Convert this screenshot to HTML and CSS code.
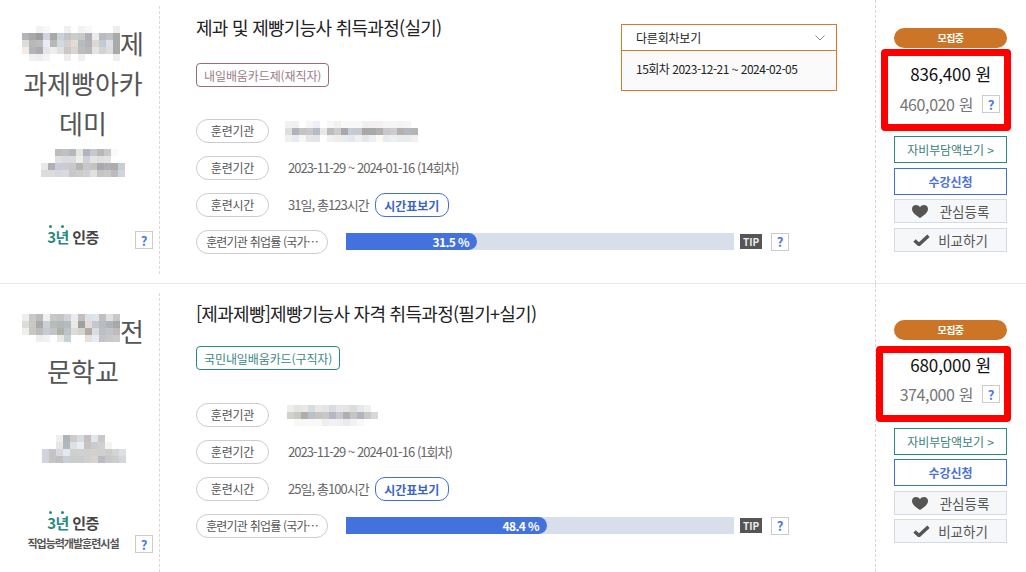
FILE: index.html
```html
<!DOCTYPE html>
<html lang="ko">
<head>
<meta charset="utf-8">
<title>훈련과정 목록</title>
<link rel="stylesheet" href="styles.css">
</head>
<body>
<article class="course">
  <div class="org">
    <div class="org-name">
      <span class="name-line"><svg class="mosaic m-name" viewBox="0 0 14 5" aria-hidden="true"><g>
        <rect x="2" y="0" fill="#f2f2f0"/><rect x="3" y="0" fill="#f8f8f8"/><rect x="6" y="0" fill="#f0f0f2"/><rect x="8" y="0" fill="#f2f2f2"/><rect x="9" y="0" fill="#f8f8f8"/><rect x="13" y="0" fill="#eee"/>
        <rect x="0" y="1" fill="#b4b4b6"/><rect x="1" y="1" fill="#a8a8aa"/><rect x="2" y="1" fill="#9e9e9e"/><rect x="3" y="1" fill="#d0d4dc"/><rect x="4" y="1" fill="#a8a8a8"/><rect x="5" y="1" fill="#ccd0d8"/><rect x="6" y="1" fill="#c4c4c8"/><rect x="7" y="1" fill="#ccccc8"/><rect x="8" y="1" fill="#c8c8c8"/><rect x="9" y="1" fill="#b0b0b0"/><rect x="10" y="1" fill="#ecebec"/><rect x="11" y="1" fill="#b8bcc0"/><rect x="12" y="1" fill="#c0c2c6"/><rect x="13" y="1" fill="#aaa"/>
        <rect x="0" y="2" fill="#dcdcdc"/><rect x="1" y="2" fill="#b8b8b8"/><rect x="2" y="2" fill="#bcbcbc"/><rect x="3" y="2" fill="#e8ecf4"/><rect x="4" y="2" fill="#b8b8b4"/><rect x="5" y="2" fill="#d4d8e0"/><rect x="6" y="2" fill="#d0d0d0"/><rect x="7" y="2" fill="#e4dcd4"/><rect x="8" y="2" fill="#b4bcc0"/><rect x="9" y="2" fill="#b0b4b8"/><rect x="10" y="2" fill="#e0d8d0"/><rect x="11" y="2" fill="#c0ccd4"/><rect x="12" y="2" fill="#dce0e4"/><rect x="13" y="2" fill="#aaa"/>
        <rect x="0" y="3" fill="#f4ece0"/><rect x="1" y="3" fill="#b4b4b4"/><rect x="2" y="3" fill="#acacb0"/><rect x="3" y="3" fill="#e4e6e8"/><rect x="4" y="3" fill="#eceef0"/><rect x="5" y="3" fill="#e0e0e0"/><rect x="6" y="3" fill="#ccc8c8"/><rect x="7" y="3" fill="#dcd4cc"/><rect x="8" y="3" fill="#bcbcc0"/><rect x="9" y="3" fill="#b8b8b8"/><rect x="10" y="3" fill="#e4e4e4"/><rect x="11" y="3" fill="#d0d4d4"/><rect x="12" y="3" fill="#ddd"/><rect x="13" y="3" fill="#aaa"/>
        <rect x="1" y="4" fill="#f0f0f0"/><rect x="2" y="4" fill="#eee"/><rect x="3" y="4" fill="#f4f4f4"/><rect x="6" y="4" fill="#eee"/><rect x="8" y="4" fill="#f0f0f0"/><rect x="13" y="4" fill="#eee"/>
      </g></svg>제</span>
      <span class="name-line">과제빵아카</span>
      <span class="name-line">데미</span>
    </div>
    <svg class="mosaic m-addr" viewBox="0 0 12 4" aria-hidden="true"><g>
      <rect x="2" y="0" fill="#bcbcbc"/><rect x="3" y="0" fill="#c0c0c0"/><rect x="4" y="0" fill="#b4b8bc"/><rect x="5" y="0" fill="#e4e4e0"/><rect x="6" y="0" fill="#b0b4c0"/><rect x="7" y="0" fill="#c8c8c8"/><rect x="8" y="0" fill="#b8b8bc"/><rect x="9" y="0" fill="#c8c8c8"/><rect x="10" y="0" fill="#f8fafa"/>
      <rect x="2" y="1" fill="#e0e0e0"/><rect x="3" y="1" fill="#d8dce0"/><rect x="4" y="1" fill="#dcdcdc"/><rect x="5" y="1" fill="#eeeeea"/><rect x="6" y="1" fill="#d0d0d8"/><rect x="7" y="1" fill="#e4e4e4"/><rect x="8" y="1" fill="#e0e0e0"/><rect x="9" y="1" fill="#e4e4e4"/>
      <rect x="0" y="2" fill="#e8e8e4"/><rect x="1" y="2" fill="#b0b0b0"/><rect x="2" y="2" fill="#c8ccd8"/><rect x="3" y="2" fill="#ccccd0"/><rect x="4" y="2" fill="#c8c8c8"/><rect x="5" y="2" fill="#b4b4b4"/><rect x="6" y="2" fill="#c8c8c8"/><rect x="7" y="2" fill="#c4c4c4"/><rect x="8" y="2" fill="#a8a8b0"/><rect x="9" y="2" fill="#b0b0b4"/><rect x="10" y="2" fill="#acacac"/><rect x="11" y="2" fill="#c8ccd4"/>
      <rect x="0" y="3" fill="#dcdcdc"/><rect x="1" y="3" fill="#dcdcdc"/><rect x="2" y="3" fill="#d4d8e0"/><rect x="3" y="3" fill="#d8dae0"/><rect x="4" y="3" fill="#c8c8c8"/><rect x="5" y="3" fill="#ccc"/><rect x="6" y="3" fill="#d0d0d4"/><rect x="7" y="3" fill="#e0e0dc"/><rect x="8" y="3" fill="#c4c4c4"/><rect x="9" y="3" fill="#c8c8c8"/><rect x="10" y="3" fill="#bcbcbc"/><rect x="11" y="3" fill="#d0d4dc"/>
    </g></svg>
    <div class="cert">
      <div class="cert-main">
        <span class="cert-mark"><span class="cert-year">3년</span> 인증</span>
      </div>
      <span class="help">?</span>
    </div>
  </div>

  <div class="main">
    <div class="head">
      <h2 class="title">제과 및 제빵기능사 취득과정(실기)</h2>
      <span class="tag tag-plum">내일배움카드제(재직자)</span>
    </div>
    <div class="rows">
      <div class="row"><span class="pill">훈련기관</span>
        <svg class="mosaic m-inst-a" viewBox="0 0 19 3" aria-hidden="true"><g>
          <rect x="0" y="0" fill="#f4f2f0"/><rect x="1" y="0" fill="#f0f0f0"/><rect x="3" y="0" fill="#f6f6f6"/><rect x="4" y="0" fill="#ecf0f4"/><rect x="6" y="0" fill="#f8f8f8"/><rect x="7" y="0" fill="#f6f0ec"/><rect x="8" y="0" fill="#f8f8f8"/><rect x="9" y="0" fill="#f8f8f8"/><rect x="10" y="0" fill="#f8f8f8"/><rect x="11" y="0" fill="#f0f0f0"/><rect x="12" y="0" fill="#f2f0f0"/><rect x="13" y="0" fill="#f4f0ee"/><rect x="14" y="0" fill="#f6f6f6"/><rect x="15" y="0" fill="#f6f6f6"/><rect x="16" y="0" fill="#f4f4f4"/><rect x="17" y="0" fill="#f6f6f6"/>
          <rect x="0" y="1" fill="#dedede"/><rect x="1" y="1" fill="#b0b4b8"/><rect x="2" y="1" fill="#c4c4c4"/><rect x="3" y="1" fill="#c8c8cc"/><rect x="4" y="1" fill="#b4bcc4"/><rect x="5" y="1" fill="#e8e8e8"/><rect x="6" y="1" fill="#bcbcbc"/><rect x="7" y="1" fill="#ccc"/><rect x="8" y="1" fill="#a8a8ac"/><rect x="9" y="1" fill="#c4ccd4"/><rect x="10" y="1" fill="#c8c8d0"/><rect x="11" y="1" fill="#a8a8a8"/><rect x="12" y="1" fill="#a8a8a8"/><rect x="13" y="1" fill="#b0b0b0"/><rect x="14" y="1" fill="#c8c8cc"/><rect x="15" y="1" fill="#ccccd0"/><rect x="16" y="1" fill="#b8b0ac"/><rect x="17" y="1" fill="#b4b8bc"/><rect x="18" y="1" fill="#b4b4b4"/>
          <rect x="0" y="2" fill="#f0f0f0"/><rect x="1" y="2" fill="#e8eaec"/><rect x="2" y="2" fill="#f6f6f6"/><rect x="3" y="2" fill="#e4e6ea"/><rect x="4" y="2" fill="#e4e4e8"/><rect x="6" y="2" fill="#f0f2f2"/><rect x="7" y="2" fill="#f0ece8"/><rect x="8" y="2" fill="#e8ecf0"/><rect x="9" y="2" fill="#e4e8ec"/><rect x="10" y="2" fill="#f0f0f0"/><rect x="11" y="2" fill="#e4e6ea"/><rect x="12" y="2" fill="#ecf0f4"/><rect x="13" y="2" fill="#fbfaf4"/><rect x="14" y="2" fill="#e8ecf0"/><rect x="15" y="2" fill="#ecf0f0"/><rect x="16" y="2" fill="#e8ecf0"/><rect x="17" y="2" fill="#e8ecf0"/><rect x="18" y="2" fill="#f0f0f0"/>
        </g></svg>
      </div>
      <div class="row"><span class="pill">훈련기간</span><span class="val">2023-11-29 ~ 2024-01-16 (14회차)</span></div>
      <div class="row"><span class="pill">훈련시간</span><span class="val">31일, 총123시간</span><span class="btn-time">시간표보기</span></div>
      <div class="row"><span class="pill pill-wide">훈련기관 취업률 (국가…</span>
        <div class="bar"><div class="fill" style="width:131px">31.5 %</div></div>
        <span class="tip">TIP</span><span class="help help-tip">?</span>
      </div>
    </div>
    <div class="rounds">
      <div class="rounds-head">다른회차보기<svg class="chev" viewBox="0 0 10 6" aria-hidden="true"><path d="M.5.5 5 5 9.5.5"/></svg></div>
      <div class="rounds-item">15회차 2023-12-21 ~ 2024-02-05</div>
    </div>
  </div>

  <div class="side side-a">
    <div class="badge">모집중</div>
    <div class="price">
      <div class="mark mark-a"></div>
      <div class="price-full">836,400 원</div>
      <div class="price-self"><span>460,020 원</span><span class="help">?</span></div>
    </div>
    <a class="act act-teal">자비부담액보기 &gt;</a>
    <a class="act act-blue">수강신청</a>
    <a class="act act-gray act-like"><svg class="ic-heart" viewBox="0 0 16 13" aria-hidden="true"><path d="M8 13C5 10.800 0 8 0 3.900 0 1.600 1.800 0 4 0 5.700 0 7.200.9 8 2.300 8.800.9 10.300 0 12 0c2.200 0 4 1.600 4 3.900C16 8 11 10.800 8 13Z"/></svg>관심등록</a>
    <a class="act act-gray act-cmp"><svg class="ic-check" viewBox="0 0 17 12" aria-hidden="true"><path d="M1.500 6.500 6 10.500 15.500 1.800"/></svg>비교하기</a>
  </div>
</article>

<article class="course course-b">
  <div class="org">
    <div class="org-name">
      <span class="name-line"><svg class="mosaic m-name" viewBox="0 0 14 5" aria-hidden="true"><g>
        <rect x="0" y="0" fill="#eee"/><rect x="1" y="0" fill="#c8c8c8"/><rect x="2" y="0" fill="#bcbcbc"/><rect x="3" y="0" fill="#ecf0f4"/><rect x="4" y="0" fill="#c8c8c8"/><rect x="5" y="0" fill="#c4c4c4"/><rect x="6" y="0" fill="#d0d4d8"/><rect x="7" y="0" fill="#ececec"/><rect x="8" y="0" fill="#c0c0c0"/><rect x="9" y="0" fill="#e0e0e0"/><rect x="10" y="0" fill="#dce4ec"/><rect x="11" y="0" fill="#c0c0c0"/><rect x="12" y="0" fill="#e0e0e0"/><rect x="13" y="0" fill="#c8c8c8"/>
        <rect x="0" y="1" fill="#dcdcdc"/><rect x="1" y="1" fill="#c8c8c4"/><rect x="2" y="1" fill="#aaa"/><rect x="3" y="1" fill="#c8d0d8"/><rect x="4" y="1" fill="#b8bcb8"/><rect x="5" y="1" fill="#b0b8bc"/><rect x="6" y="1" fill="#b4bcc0"/><rect x="7" y="1" fill="#ece8e8"/><rect x="8" y="1" fill="#a0a0a0"/><rect x="9" y="1" fill="#e0dcd8"/><rect x="10" y="1" fill="#c4c8cc"/><rect x="11" y="1" fill="#b8bcc0"/><rect x="12" y="1" fill="#b0b4b8"/><rect x="13" y="1" fill="#a8a8a8"/>
        <rect x="0" y="2" fill="#eeeeea"/><rect x="1" y="2" fill="#c8c8c0"/><rect x="2" y="2" fill="#bcbcbc"/><rect x="3" y="2" fill="#c8ccd0"/><rect x="4" y="2" fill="#c4c4c0"/><rect x="5" y="2" fill="#b0b0a8"/><rect x="6" y="2" fill="#bcc4c8"/><rect x="7" y="2" fill="#dcdcdc"/><rect x="8" y="2" fill="#d4d4d0"/><rect x="9" y="2" fill="#b0aca8"/><rect x="10" y="2" fill="#dcdcd8"/><rect x="11" y="2" fill="#bcc0c4"/><rect x="12" y="2" fill="#c4c4c8"/><rect x="13" y="2" fill="#bcbcbc"/>
        <rect x="2" y="3" fill="#f0eeea"/><rect x="3" y="3" fill="#eef2f6"/><rect x="5" y="3" fill="#ece8e4"/><rect x="6" y="3" fill="#c8d0d4"/><rect x="9" y="3" fill="#e4e0dc"/><rect x="10" y="3" fill="#e4ecf4"/><rect x="11" y="3" fill="#c4c4c8"/><rect x="12" y="3" fill="#c8c8c8"/><rect x="13" y="3" fill="#ccc"/>
      </g></svg>전</span>
      <span class="name-line">문학교</span>
    </div>
    <svg class="mosaic m-addr" viewBox="0 0 12 4" aria-hidden="true"><g>
      <rect x="2" y="0" fill="#f0efec"/><rect x="3" y="0" fill="#b0b4b8"/><rect x="4" y="0" fill="#ccccc8"/><rect x="5" y="0" fill="#d8dce0"/><rect x="6" y="0" fill="#c0c0bc"/><rect x="7" y="0" fill="#e4e4ec"/><rect x="8" y="0" fill="#c8c8c8"/>
      <rect x="2" y="1" fill="#e8e6e4"/><rect x="3" y="1" fill="#b0b8c0"/><rect x="4" y="1" fill="#e0e0e0"/><rect x="5" y="1" fill="#e8ecf4"/><rect x="6" y="1" fill="#c4c4c0"/><rect x="7" y="1" fill="#c8ccd0"/><rect x="8" y="1" fill="#d0d0d0"/><rect x="9" y="1" fill="#f4f4f2"/>
      <rect x="0" y="2" fill="#d0d4dc"/><rect x="1" y="2" fill="#c4c4c4"/><rect x="2" y="2" fill="#d8d8dc"/><rect x="3" y="2" fill="#e4e8ec"/><rect x="4" y="2" fill="#d0d0d0"/><rect x="5" y="2" fill="#d0d0d0"/><rect x="6" y="2" fill="#d0d0d0"/><rect x="7" y="2" fill="#d4d0cc"/><rect x="8" y="2" fill="#d0d0d0"/><rect x="9" y="2" fill="#ccc"/><rect x="10" y="2" fill="#d4d4d4"/><rect x="11" y="2" fill="#dce0e4"/>
      <rect x="0" y="3" fill="#d0d4dc"/><rect x="1" y="3" fill="#c4c4c4"/><rect x="2" y="3" fill="#c0c0bc"/><rect x="3" y="3" fill="#c8d0d8"/><rect x="4" y="3" fill="#ccc"/><rect x="5" y="3" fill="#ccc"/><rect x="6" y="3" fill="#d0d0cc"/><rect x="7" y="3" fill="#d8d4d0"/><rect x="8" y="3" fill="#b8bcc4"/><rect x="9" y="3" fill="#c8c8c8"/><rect x="10" y="3" fill="#ccc"/><rect x="11" y="3" fill="#d4d8dc"/>
    </g></svg>
    <div class="cert">
      <div class="cert-main">
        <span class="cert-mark"><span class="cert-year">3년</span> 인증</span>
        <span class="cert-sub">직업능력개발훈련시설</span>
      </div>
      <span class="help">?</span>
    </div>
  </div>

  <div class="main">
    <div class="head">
      <h2 class="title">[제과제빵]제빵기능사 자격 취득과정(필기+실기)</h2>
      <span class="tag tag-teal">국민내일배움카드(구직자)</span>
    </div>
    <div class="rows">
      <div class="row"><span class="pill">훈련기관</span>
        <svg class="mosaic m-inst-b" viewBox="0 0 13 3" aria-hidden="true"><g>
          <rect x="0" y="0" fill="#eee"/><rect x="1" y="0" fill="#e4e4e4"/><rect x="2" y="0" fill="#e8e8e8"/><rect x="3" y="0" fill="#d8dce0"/><rect x="4" y="0" fill="#e8e8e8"/><rect x="5" y="0" fill="#e4e4e4"/><rect x="6" y="0" fill="#d8dce0"/><rect x="7" y="0" fill="#e4e6ea"/><rect x="8" y="0" fill="#e4e4e4"/><rect x="9" y="0" fill="#dcdcdc"/><rect x="10" y="0" fill="#e4e8ec"/><rect x="11" y="0" fill="#ecf0f0"/>
          <rect x="0" y="1" fill="#d0d0cc"/><rect x="1" y="1" fill="#c8c8c4"/><rect x="2" y="1" fill="#b0aca8"/><rect x="3" y="1" fill="#b8c0c8"/><rect x="4" y="1" fill="#c4c4c0"/><rect x="5" y="1" fill="#c8c8c8"/><rect x="6" y="1" fill="#b4b8c0"/><rect x="7" y="1" fill="#c8c8cc"/><rect x="8" y="1" fill="#b0b0b0"/><rect x="9" y="1" fill="#c4c4c0"/><rect x="10" y="1" fill="#b4b4bc"/><rect x="11" y="1" fill="#c8c8c8"/><rect x="12" y="1" fill="#d8d8d8"/>
          <rect x="1" y="2" fill="#f8f8f4"/><rect x="2" y="2" fill="#f8f8f8"/><rect x="3" y="2" fill="#f8f8f8"/><rect x="4" y="2" fill="#f8f8f8"/><rect x="5" y="2" fill="#eee"/><rect x="6" y="2" fill="#f2f2f4"/><rect x="7" y="2" fill="#f0f0f4"/><rect x="8" y="2" fill="#e8eaee"/><rect x="9" y="2" fill="#f0f2f6"/><rect x="10" y="2" fill="#f8f8fc"/>
        </g></svg>
      </div>
      <div class="row"><span class="pill">훈련기간</span><span class="val">2023-11-29 ~ 2024-01-16 (1회차)</span></div>
      <div class="row"><span class="pill">훈련시간</span><span class="val">25일, 총100시간</span><span class="btn-time">시간표보기</span></div>
      <div class="row"><span class="pill pill-wide">훈련기관 취업률 (국가…</span>
        <div class="bar"><div class="fill" style="width:201px">48.4 %</div></div>
        <span class="tip">TIP</span><span class="help help-tip">?</span>
      </div>
    </div>
  </div>

  <div class="side side-b">
    <div class="badge">모집중</div>
    <div class="price">
      <div class="mark mark-b"></div>
      <div class="price-full">680,000 원</div>
      <div class="price-self"><span>374,000 원</span><span class="help">?</span></div>
    </div>
    <a class="act act-teal">자비부담액보기 &gt;</a>
    <a class="act act-blue">수강신청</a>
    <a class="act act-gray act-like"><svg class="ic-heart" viewBox="0 0 16 13" aria-hidden="true"><path d="M8 13C5 10.800 0 8 0 3.900 0 1.600 1.800 0 4 0 5.700 0 7.200.9 8 2.300 8.800.9 10.300 0 12 0c2.200 0 4 1.600 4 3.900C16 8 11 10.800 8 13Z"/></svg>관심등록</a>
    <a class="act act-gray act-cmp"><svg class="ic-check" viewBox="0 0 17 12" aria-hidden="true"><path d="M1.500 6.500 6 10.500 15.500 1.800"/></svg>비교하기</a>
  </div>
</article>
</body>
</html>
```
FILE: styles.css
```css
* { box-sizing: border-box; }
html, body { margin: 0; height: 572px; overflow: hidden; background: #fff; }
body { font-family: "Noto Sans CJK KR", "Noto Sans", sans-serif; color: #555; font-size: 12px; }

.course { display: grid; grid-template-columns: 160px 716px 150px; height: 284px; border-bottom: 1px solid #e6e6e6; }
.course-b { height: 288px; border-bottom: 0; }

.mosaic { display: block; shape-rendering: crispEdges; }
.mosaic rect { width: 1px; height: 1px; }
.m-name { display: inline-block; width: 98px; height: 35px; vertical-align: middle; flex: none; }
.m-addr { width: 84px; height: 28px; margin: 6px 0 0 41px; }
.m-inst-a { width: 133px; height: 21px; margin-left: 16px; }
.m-inst-b { width: 91px; height: 21px; margin-left: 18px; }

.org { display: flex; flex-direction: column; margin-top: 6px; height: 268px; border-right: 1px dashed #d8d8d8; position: relative; }
.org-name { padding: 17px 0 0 7px; font-size: 26px; line-height: 40px; text-align: center; color: #555; }
.name-line { display: flex; justify-content: center; align-items: center; height: 40px; }
.cert { margin-top: auto; display: flex; align-items: flex-end; padding: 0 6px 25px 0; }
.cert-main { flex: 1; display: flex; flex-direction: column; align-items: center; padding: 0 0 2px 11px; }
.cert-mark { font-size: 15px; font-weight: 700; line-height: 20px; color: #444; letter-spacing: -.6px; position: relative; }
.cert-year { color: #2a8a80; position: relative; }
.cert-year::before { content: ""; position: absolute; left: 2px; top: -1px; width: 3px; height: 3px; border-radius: 50%; background: #2a8a80; box-shadow: 12px 0 #2a8a80; }
.cert-sub { font-size: 11px; font-weight: 700; line-height: 16px; letter-spacing: -1px; color: #555; margin-top: 2px; }
.help { display: inline-flex; flex: none; align-items: center; justify-content: center; width: 18px; height: 18px; border: 1px solid #ccc; background: #fff; color: #4a78e0; font-size: 13px; font-weight: 700; line-height: 1; }

.course-b .org { margin-top: 9px; height: 279px; }
.course-b .org-name { padding-top: 18px; }
.course-b .m-addr { margin-top: 44px; margin-left: 42px; }
.course-b .cert { padding-bottom: 19px; }

.main { position: relative; padding-left: 36px; border-right: 1px dashed #d8d8d8; }
.head { height: 119px; padding-top: 15px; }
.title { margin: 0; font-size: 18px; font-weight: 400; line-height: 24px; color: #222; letter-spacing: -.72px; }
.tag { display: inline-flex; align-items: center; height: 24px; margin-top: 24px; padding: 0 7px; border: 1px solid; border-radius: 4px; font-size: 12px; letter-spacing: -.1px; }
.tag-plum { border-color: #9c6b7c; color: #9c7a86; }
.tag-teal { border-color: #2a8a80; color: #3a8a82; }
.course-b .title { margin-top: 2px; }
.course-b .tag { margin-top: 21px; }

.rows { display: flex; flex-direction: column; gap: 13px; }
.row { display: flex; align-items: center; height: 24px; }
.pill { display: flex; align-items: center; justify-content: center; width: 73px; height: 24px; padding-bottom: 1px; border: 1px solid #ccc; border-radius: 12px; font-size: 12px; color: #555; flex: none; letter-spacing: -.2px; }
.pill-wide { width: 132px; letter-spacing: -.8px; }
.val { margin-left: 19px; padding-bottom: 2px; font-size: 13px; letter-spacing: -.95px; color: #666; }
.btn-time { display: flex; align-items: center; justify-content: center; width: 74px; height: 24px; margin-left: 6px; border: 1px solid #3f6fdc; border-radius: 10px; color: #3a64c8; font-weight: 700; font-size: 12px; }
.bar { width: 388px; height: 17px; margin: 0 0 1px 18px; background: #d8deea; }
.fill { height: 17px; background: #4472dc; border-radius: 0 9px 9px 0; color: #fff; font-size: 12px; font-weight: 700; line-height: 17px; text-align: right; padding-right: 8px; letter-spacing: -.6px; }
.tip { display: flex; align-items: center; justify-content: center; width: 22px; height: 15px; margin: 0 0 1px 6px; background: #555; color: #eee; font-size: 10px; font-weight: 700; }
.help-tip { margin: 0 0 1px 9px; }

.rounds { position: absolute; left: 461px; top: 24px; width: 216px; height: 67px; border: 1px solid #d9782b; font-size: 12px; color: #222; }
.rounds-head { display: flex; align-items: center; justify-content: space-between; height: 26px; padding: 0 11px 0 14px; border-bottom: 1px solid #d9782b; letter-spacing: -.2px; }
.rounds-item { height: 39px; padding-left: 14px; background: #fafafa; line-height: 35px; letter-spacing: -.5px; }
.chev { width: 10px; height: 6px; fill: none; stroke: #888; stroke-width: 1; }

.side { display: flex; flex-direction: column; padding-left: 18px; width: 131px; }
.side-a { padding-top: 28px; }
.side-b { padding-top: 36px; }
.badge { height: 20px; border-radius: 10px; background: #cc7526; color: #fff; font-size: 10px; font-weight: 700; text-align: center; line-height: 20px; letter-spacing: -.5px; }
.price { position: relative; height: 88px; padding-top: 14px; }
.side-b .price { padding-top: 13px; }
.price-full { height: 24px; padding-right: 16px; text-align: right; font-size: 17px; line-height: 24px; color: #111; letter-spacing: -.1px; }
.price-self { display: flex; justify-content: flex-end; align-items: center; gap: 9px; height: 24px; margin-top: 6px; padding-right: 7px; font-size: 16px; color: #777; letter-spacing: -.4px; }
.side-b .price-self { margin-top: 5px; }
.mark { position: absolute; border: 7px solid #f00; border-radius: 4px; }
.mark-a { left: -13px; top: 1px; width: 130px; height: 82px; }
.mark-b { left: -18px; top: 6px; width: 135px; height: 76px; }

.act { display: flex; align-items: center; justify-content: center; height: 27px; border: 1px solid; font-size: 12px; }
.act-teal { border-color: #2a8a80; color: #3a7f78; letter-spacing: -.1px; }
.act-blue { border-color: #3f6fdc; color: #4a72d8; font-weight: 700; margin-top: 5px; }
.act-gray { height: 24px; border-color: #d5dbe6; background: #f6f7f8; color: #555; font-size: 13.500px; }
.act-like { margin-top: 4px; gap: 12px; }
.act-cmp { margin-top: 5px; gap: 8px; }
.side-b .act-blue { margin-top: 4px; }
.side-b .act-like { margin-top: 5px; }
.side-b .act-cmp { margin-top: 4px; }
.ic-heart { width: 16px; height: 13px; fill: #555; }
.ic-check { width: 17px; height: 12px; fill: none; stroke: #555; stroke-width: 3.500; }
```
